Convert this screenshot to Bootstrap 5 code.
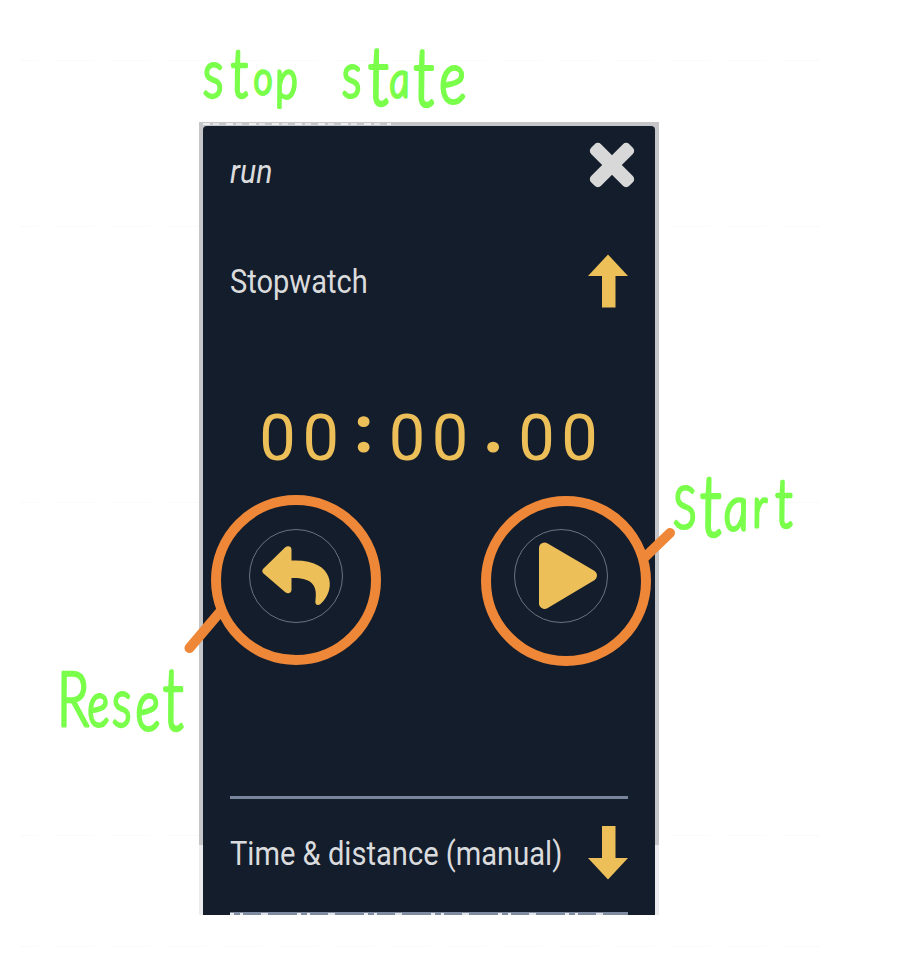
<!DOCTYPE html>
<html lang="en">
<head>
<meta charset="utf-8">
<meta name="viewport" content="width=device-width, initial-scale=1">
<title>Stopwatch – stop state</title>
<link href="https://cdn.jsdelivr.net/npm/bootstrap@5.3.0/dist/css/bootstrap.min.css" rel="stylesheet">
<style>
body{margin:0;background:#fff;overflow:hidden}
.board{width:899px;height:957px;padding:122px 0 0 199px;
 background:
  repeating-linear-gradient(90deg,#fff 0 18px,transparent 18px 56px) 38px 0/780px 957px no-repeat,
  linear-gradient(#fafafa,#fafafa) 20px 60px/800px 1px no-repeat,
  linear-gradient(#fafafa,#fafafa) 20px 226px/800px 1px no-repeat,
  linear-gradient(#fafafa,#fafafa) 20px 502px/800px 1px no-repeat,
  linear-gradient(#fafafa,#fafafa) 20px 835px/800px 1px no-repeat,
  linear-gradient(#fafafa,#fafafa) 20px 946px/800px 1px no-repeat,#fff}
.frame{width:460px;height:793px;padding:4px 4px 0;background:linear-gradient(#c5c6c9 0 723px,#ececee 723px)}
.frame-top{width:188px;height:2px;margin:-3px 0 1px;background:repeating-linear-gradient(90deg,#eee 0 7px,#c5c6c9 7px 10px,#e4e4e5 10px 16px,#c5c6c9 16px 23px)}
.phone{height:789px;background:#141d2c;border-radius:4px 4px 0 0;padding:0 27px;font-family:Roboto,"Liberation Sans",sans-serif;color:#dadbdd}
.head-row{height:100px;padding-top:15px}
.close-x{margin-right:-8px}
.item-top{height:110px}
.item-bottom{height:113px;padding-bottom:5px}
.label{font-size:33px;line-height:44px;white-space:nowrap;transform-origin:0 50%;display:inline-block;padding-top:1px}
.l-run{transform:scaleX(.92)}
.l-stop{transform:scaleX(.88)}
.l-manual{transform:scaleX(.882);width:330px}
.timer{color:#ecbf59;font-size:65px;line-height:72px;height:72px;margin:66px 0 0 26px;width:346px}
.timer span{width:43.15px;text-align:center}
.timer .pt{font-weight:900}
.timer .up{transform:translateY(-8px)}
.ring-row{margin:55px 20px 0 19px}
.ring{width:94px;height:94px;border:1.5px solid #6b7280;border-radius:50%;padding:0;background:none;display:block}
.ring svg{display:block}
.rule{height:3px;background:#79859b;width:398px}
.cut{height:3px;width:398px;background:linear-gradient(#7f8ba1 0 1px,transparent 1px),repeating-linear-gradient(90deg,#e9ebef 0 4px,#7f8ba1 4px 10px,#e9ebef 10px 13px,#7f8ba1 13px 31px,#dfe2e7 31px 38px,#7f8ba1 38px 67px)}
.notes{left:0;top:0;pointer-events:none}
.ink{font-family:Lato,"Open Sans",sans-serif;font-style:italic;font-weight:300;fill:#7aff4b;stroke:#7aff4b;stroke-width:3.2;stroke-linejoin:round}
</style>
<script src="https://cdn.jsdelivr.net/npm/bootstrap@5.3.0/dist/js/bootstrap.bundle.min.js"></script>
</head>
<body>
<main class="board position-relative">
 <div class="frame">
  <div class="frame-top"></div>
  <section class="phone d-flex flex-column">
   <div class="head-row d-flex justify-content-between">
    <em class="label l-run mt-2">run</em>
    <svg class="close-x" width="48" height="48" viewBox="0 0 48 48"><g transform="rotate(45 24 24)" fill="#d8d8d9"><rect x="-3" y="17" width="54" height="14" rx="4.500"/><rect x="17" y="-3" width="14" height="54" rx="4.500"/></g></svg>
   </div>
   <div class="item-top d-flex justify-content-between align-items-center">
    <span class="label l-stop">Stopwatch</span>
    <svg width="40" height="54" viewBox="0 0 40 54"><path d="M20 0.500 40 22H27.500V53.500H14V22H0Z" fill="#ecbf59"/></svg>
   </div>
   <div class="timer d-flex"><span>0</span><span>0</span><span class="pt up">:</span><span>0</span><span>0</span><span class="pt up">.</span><span>0</span><span>0</span></div>
   <div class="ring-row d-flex justify-content-between">
    <button class="ring" aria-label="Reset"><svg width="91" height="91" viewBox="0 0 91 91"><path transform="translate(.5 .5)" d="M13 37Q10.500 39.500 13 42L34.500 60.500C37.500 63 41 61.500 41 58.500V46.500C59 46 67.500 52 65 68.500C64 73 67 75 70 72.500C87 57 83 27 41 29V18C41 14.500 37 14 34.500 16Z" fill="#ecbf59"/></svg></button>
    <button class="ring" aria-label="Start"><svg width="91" height="91" viewBox="0 0 91 91"><path d="M29.500 17 76.500 44.500 29.500 72.500Z" fill="#ecbf59" stroke="#ecbf59" stroke-width="11" stroke-linejoin="round"/></svg></button>
   </div>
   <div class="rule mt-auto"></div>
   <div class="item-bottom d-flex justify-content-between align-items-center">
    <span class="label l-manual">Time &amp; distance (manual)</span>
    <svg class="flex-shrink-0" width="40" height="54" viewBox="0 0 40 54"><path d="M20 53.500 40 32H27.500V0H14V32H0Z" fill="#ecbf59"/></svg>
   </div>
   <div class="cut"></div>
  </section>
 </div>
 <svg class="notes position-absolute" width="899" height="957" viewBox="0 0 899 957">
  <g fill="none" stroke="#ee8737" stroke-width="10">
   <circle cx="296" cy="580" r="80"/><circle cx="566" cy="581" r="80"/>
   <path d="M220 612 189.500 648M645 557 670 533" stroke-linecap="round"/>
  </g>
  <g class="ink">
   <text transform="translate(203 97) skewX(5) scale(.8 1)"><tspan x="2" y="0" font-size="66">s</tspan><tspan x="37" y="0" font-size="68">t</tspan><tspan x="65" y="-3" font-size="46">o</tspan><tspan x="92" y="1" font-size="54">p</tspan></text>
   <text transform="translate(342 97) skewX(5) scale(.8 1)"><tspan x="2" y="0" font-size="62">s</tspan><tspan x="34" y="8" font-size="82">t</tspan><tspan x="61" y="0" font-size="50">a</tspan><tspan x="91" y="9" font-size="82">t</tspan><tspan x="123" y="6" font-size="72">e</tspan></text>
   <text transform="translate(674 528) skewX(5) scale(.8 1)"><tspan x="1" y="0" font-size="58">S</tspan><tspan x="34" y="8" font-size="86">t</tspan><tspan x="64" y="2" font-size="62">a</tspan><tspan x="100" y="-1" font-size="56">r</tspan><tspan x="129" y="-1" font-size="68">t</tspan></text>
   <text transform="translate(59 726) skewX(5) scale(.75 1)"><tspan x="0" y="0" font-size="76">R</tspan><tspan x="40" y="0" font-size="62">e</tspan><tspan x="73" y="0" font-size="66">s</tspan><tspan x="104" y="4" font-size="70">e</tspan><tspan x="141" y="4" font-size="88">t</tspan></text>
  </g>
 </svg>
</main>
</body>
</html>
